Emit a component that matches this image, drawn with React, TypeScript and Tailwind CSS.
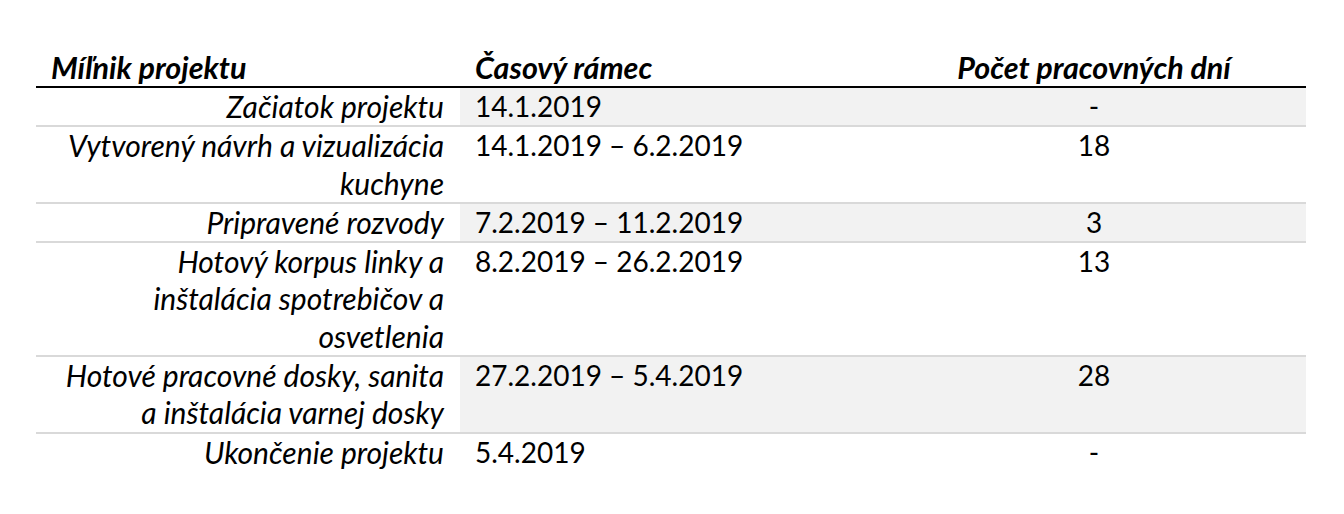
type Milestone = {
  name: string[];
  range: string;
  days: string;
  shaded: boolean;
};

const milestones: Milestone[] = [
  { name: ['Začiatok projektu'], range: '14.1.2019', days: '-', shaded: true },
  {
    name: ['Vytvorený návrh a vizualizácia', 'kuchyne'],
    range: '14.1.2019 – 6.2.2019',
    days: '18',
    shaded: false,
  },
  { name: ['Pripravené rozvody'], range: '7.2.2019 – 11.2.2019', days: '3', shaded: true },
  {
    name: ['Hotový korpus linky a', 'inštalácia spotrebičov a', 'osvetlenia'],
    range: '8.2.2019 – 26.2.2019',
    days: '13',
    shaded: false,
  },
  {
    name: ['Hotové pracovné dosky, sanita', 'a inštalácia varnej dosky'],
    range: '27.2.2019 – 5.4.2019',
    days: '28',
    shaded: true,
  },
  { name: ['Ukončenie projektu'], range: '5.4.2019', days: '-', shaded: false },
];

const App = () => {
  return (
    <div className="min-h-[514px] bg-white pt-[48px] pl-[36px] font-['Lato','Open_Sans',sans-serif] text-[28px] text-black">
      <table className="w-[1270px] table-fixed border-collapse">
        <colgroup>
          <col className="w-[424px]" />
          <col className="w-[422px]" />
          <col className="w-[424px]" />
        </colgroup>
        <thead>
          <tr className="border-b-2 border-black">
            <th className="h-[38px] px-[15px] text-left text-[30.5px] font-bold italic leading-[38px]">
              Míľnik projektu
            </th>
            <th className="px-[15px] text-left text-[30.5px] font-bold italic leading-[38px]">
              Časový rámec
            </th>
            <th className="px-[15px] text-center text-[30.5px] font-bold italic leading-[38px]">
              Počet pracovných dní
            </th>
          </tr>
        </thead>
        <tbody>
          {milestones.map((m, i) => (
            <tr
              key={m.range}
              className={
                i < milestones.length - 1 ? 'border-b-2 border-[#d9d9d9]' : ''
              }
            >
              <td className="px-4 text-right align-top text-[30px] italic leading-[37.3px] whitespace-nowrap">
                {m.name.map((line, j) => (
                  <div key={j}>{line}</div>
                ))}
              </td>
              <td
                className={`px-[15px] align-top leading-[37.3px] whitespace-nowrap ${m.shaded ? 'bg-[#f2f2f2]' : ''}`}
              >
                {m.range}
              </td>
              <td
                className={`px-[15px] text-center align-top leading-[37.3px] ${m.shaded ? 'bg-[#f2f2f2]' : ''}`}
              >
                {m.days}
              </td>
            </tr>
          ))}
        </tbody>
      </table>
    </div>
  );
};

export default App;
